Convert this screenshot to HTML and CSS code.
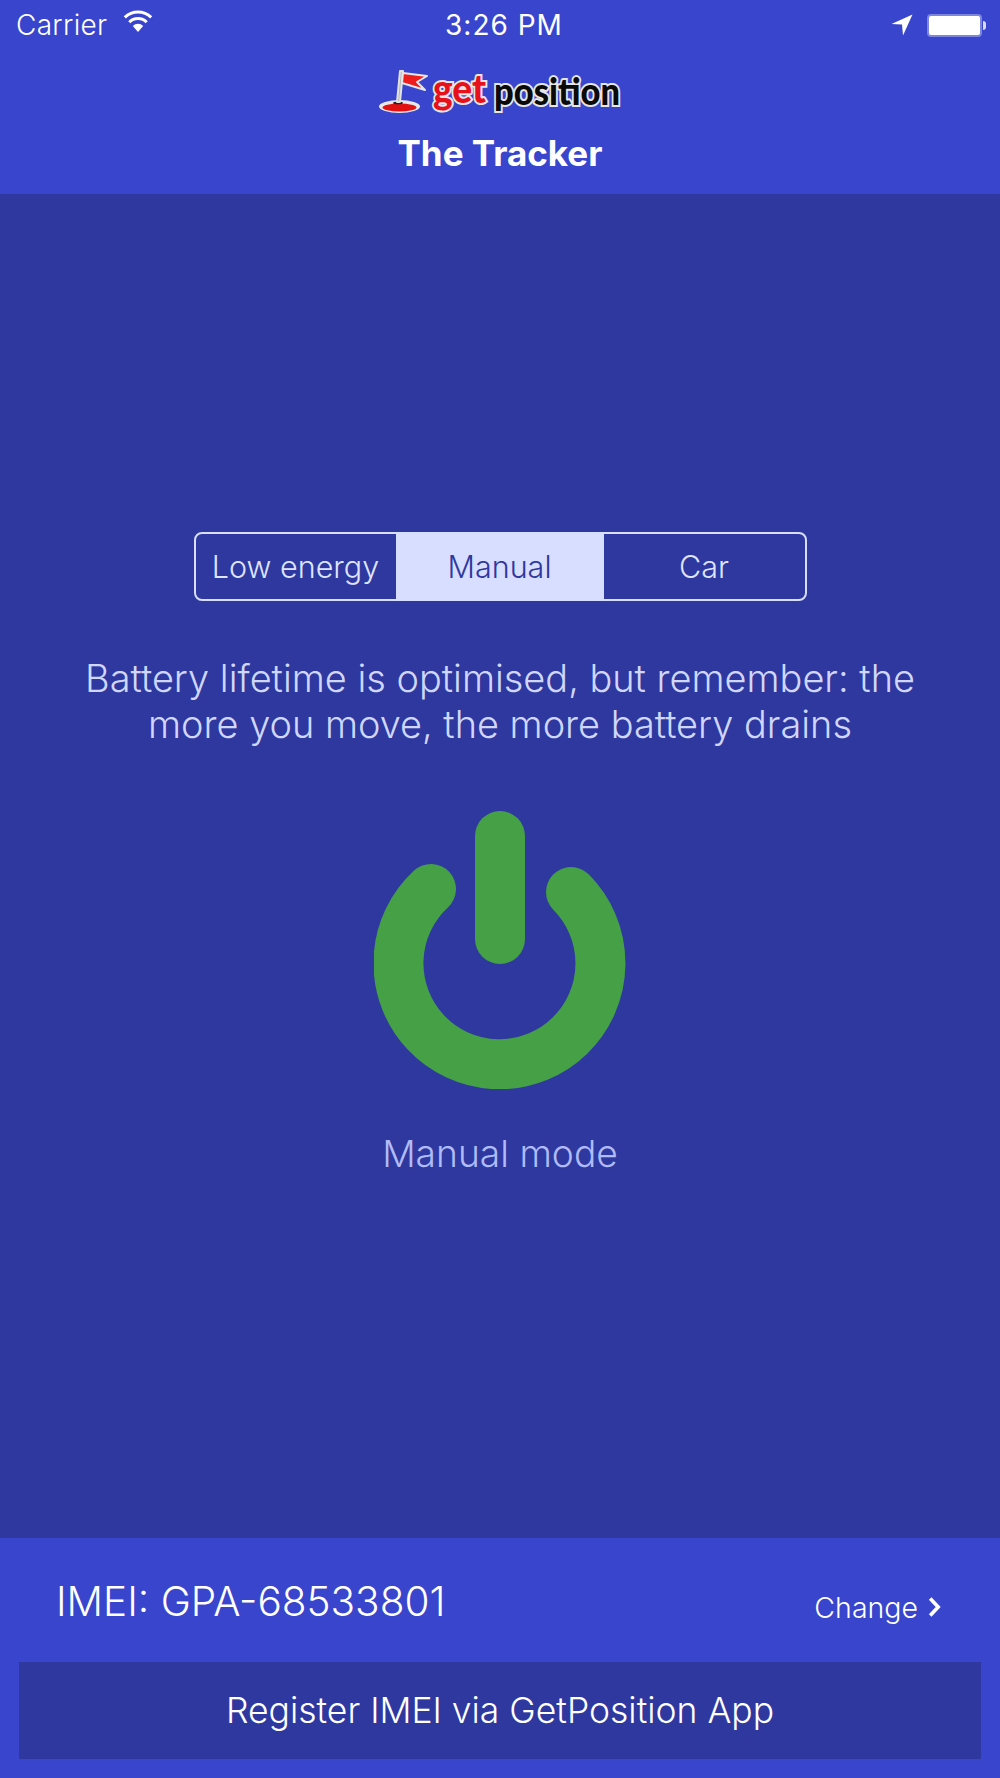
FILE: index.html
```html
<!DOCTYPE html>
<html lang="en">
<head>
<meta charset="utf-8">
<title>The Tracker</title>
<link rel="stylesheet" href="styles.css">
</head>
<body>
<div class="app">
  <header class="top">
    <div class="status">
      <div class="status-left">
        <span class="carrier">Carrier</span>
        <svg class="wifi" width="30" height="22" viewBox="0 0 30 22"><path d="M15 22 L9.8 16 A7.4 7.4 0 0 1 20.2 16 Z" fill="#fff"/><path d="M6.3 12.2 A12 12 0 0 1 23.7 12.2" fill="none" stroke="#fff" stroke-width="3"/><path d="M1.8 7.4 A19 19 0 0 1 28.2 7.4" fill="none" stroke="#fff" stroke-width="3"/></svg>
      </div>
      <div class="status-time">3:26 PM</div>
      <div class="status-right">
        <svg class="arrow" width="22" height="22" viewBox="0 0 22 22"><path d="M21.5 0.5 L12 21.5 L11 10.5 L0.5 10 Z" fill="#fff"/></svg>
        <div class="battery"></div>
        <div class="battery-tip"></div>
      </div>
    </div>
    <svg class="logo" width="242" height="46" viewBox="0 0 242 46">
      <g stroke-linejoin="round">
        <ellipse cx="20.5" cy="38.5" rx="20.5" ry="6.5" fill="#e8e8e8"/>
        <ellipse cx="20.5" cy="39.5" rx="17" ry="4" fill="#e21212"/>
        <ellipse cx="19" cy="35" rx="5" ry="1.3" fill="#222"/>
        <path d="M21 3 L24 3 L21 34 L18 34 Z" fill="#b5b5b5" stroke="#e2e2e2" stroke-width="2"/>
        <path d="M24 5 L48 8 L38 14 L46 22 L23 15 Z" fill="#ee1c1c" stroke="#e6e6e6" stroke-width="2"/>
      </g>
      <text class="logo-get" x="54" y="35" textLength="53" lengthAdjust="spacingAndGlyphs">get</text>
      <text class="logo-position" x="115" y="37" textLength="126" lengthAdjust="spacingAndGlyphs">position</text>
    </svg>
    <h1 class="title">The Tracker</h1>
  </header>

  <main class="content">
    <div class="segments">
      <div class="segment seg-low">Low energy</div>
      <div class="segment seg-manual">Manual</div>
      <div class="segment seg-car">Car</div>
    </div>
    <p class="hint">Battery lifetime is optimised, but remember: the<br>more you move, the more battery drains</p>
    <svg class="power" width="252" height="278" viewBox="0 0 252 278">
      <path d="M57 78 A101 101 0 1 0 197 81" fill="none" stroke="#45a046" stroke-width="50" stroke-linecap="round"/>
      <path d="M126 25 V128" fill="none" stroke="#45a046" stroke-width="50" stroke-linecap="round"/>
    </svg>
    <div class="mode">Manual mode</div>
  </main>

  <footer class="bottom">
    <div class="imei-row">
      <span class="imei">IMEI: GPA-68533801</span>
      <span class="change">Change <svg class="chev" width="13" height="20" viewBox="0 0 13 20"><path d="M2.2 1.5 L10.2 10 L2.2 18.5" fill="none" stroke="#fff" stroke-width="3.6"/></svg></span>
    </div>
    <div class="register">Register IMEI via GetPosition App</div>
  </footer>
</div>
</body>
</html>
```

FILE: styles.css
```css
* { box-sizing: border-box; }
html, body { margin: 0; padding: 0; }
body { font-family: Inter, "Liberation Sans", sans-serif; color: #fff; background: #2e389f; }
.app { width: 1000px; height: 1778px; display: flex; flex-direction: column; }

.top { height: 194px; background: #3845cc; display: flex; flex-direction: column; align-items: center; flex: none; }
.status { width: 100%; height: 34px; margin-top: 8px; padding: 0 14px 0 16px; display: grid; grid-template-columns: 1fr auto 1fr; align-items: center; font-size: 28px; }
.status-left { display: flex; align-items: center; gap: 16px; }
.carrier { font-weight: 350; letter-spacing: 0.3px; }
.wifi { margin-top: -8px; flex: none; }
.status-time { font-weight: 400; letter-spacing: 1px; padding-left: 6px; }
.status-right { display: flex; justify-content: flex-end; align-items: center; }
.arrow { margin-right: 14px; }
.battery { width: 55px; height: 23px; border: 2px solid #7d86de; border-radius: 4px; background: #fff; }
.battery-tip { width: 3px; height: 9px; margin-left: 1px; background: #d8dcf5; border-radius: 0 3px 3px 0; }
.logo { margin-top: 26px; flex: none; overflow: visible; }
.title { margin: 19px 0 0; font-size: 35px; line-height: 40px; font-weight: 700; }
.logo-get { font-family: Lato, sans-serif; font-weight: 900; font-size: 40px; fill: #e8101a; stroke: #e6e6e6; stroke-width: 4px; paint-order: stroke; }
.logo-position { font-family: Lato, sans-serif; font-weight: 900; font-size: 38px; fill: #0a0a0a; stroke: #e6e6e6; stroke-width: 4px; paint-order: stroke; }

.content { flex: 1; display: flex; flex-direction: column; align-items: center; padding-top: 338px; background: #2e389f; }
.segments { width: 613px; height: 69px; display: grid; grid-template-columns: 200px 208px 1fr; border: 2px solid #d8deff; border-radius: 8px; overflow: hidden; flex: none; }
.segment { display: flex; align-items: center; justify-content: center; font-size: 30.5px; font-weight: 350; color: #dfe4ff; }
.seg-manual { background: #d8deff; color: #2e389f; font-weight: 350; }
.hint { margin: 54px 0 0; font-size: 37.9px; line-height: 46px; text-align: center; color: #d0d7fe; font-weight: 350; }
.power { flex: none; margin-top: 64px; }
.mode { margin-top: 42px; font-size: 37.2px; line-height: 46px; font-weight: 350; color: #b0bbf8; }

.bottom { height: 240px; flex: none; background: #3845cc; padding: 0 19px; display: flex; flex-direction: column; }
.imei-row { height: 124px; display: flex; align-items: center; justify-content: space-between; padding: 0 40px 0 37px; }
.imei { font-size: 40.5px; font-weight: 350; padding-top: 3px; }
.change { display: flex; align-items: center; gap: 10px; font-size: 28.5px; font-weight: 350; padding-top: 14px; }
.register { height: 97px; background: #2e389f; display: flex; align-items: center; justify-content: center; font-size: 35.5px; font-weight: 350; }
```
